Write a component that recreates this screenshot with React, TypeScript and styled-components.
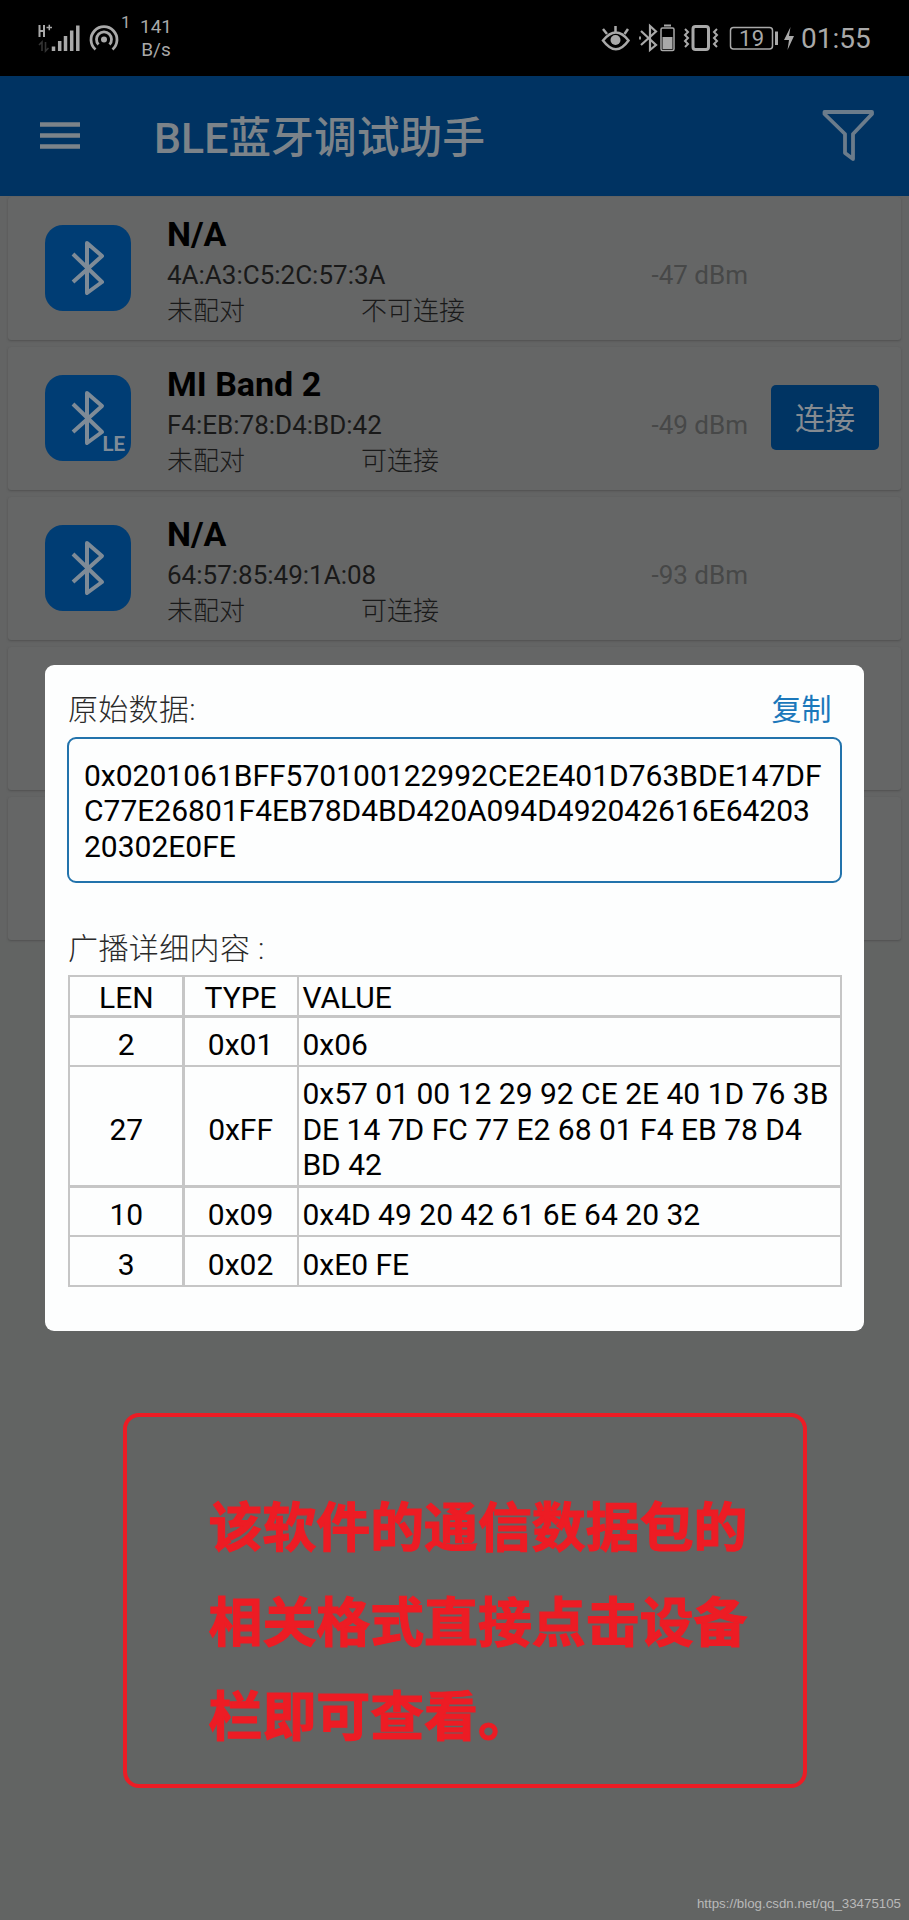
import React from "react";
import styled, { createGlobalStyle } from "styled-components";

const Global = createGlobalStyle`
  * { box-sizing: border-box; }
  body { margin: 0; background: #626463; }
`;

const Screen = styled.div`
  position: relative;
  width: 909px;
  height: 1920px;
  overflow: hidden;
  display: flex;
  flex-direction: column;
  background: #626463;
  font-family: Roboto, "Noto Sans CJK SC", sans-serif;
  color: #000;
`;

const StatusBar = styled.header`
  flex: none;
  height: 76px;
  display: flex;
  justify-content: space-between;
  background: #000;
  color: #a9a9a9;
`;

const StatusGroup = styled.div`
  display: flex;
  align-items: flex-start;
`;

const StatusSvg = styled.svg`
  display: block;
  height: 76px;
  flex: none;
`;

const HotspotCount = styled.span`
  margin: 12px 0 0 1px;
  width: 12px;
  font-size: 17px;
  line-height: 20px;
`;

const Speed = styled.div`
  margin: 15px 0 0 5px;
  width: 36px;
  text-align: center;
  font-size: 19px;
  line-height: 23px;
`;

const Clock = styled.span`
  width: 108px;
  padding-top: 23px;
  font-size: 28px;
  line-height: 32px;
`;

const BatteryLevel = styled.text`
  font-size: 22px;
  letter-spacing: 0.5px;
`;

const TitleBar = styled.div`
  flex: none;
  height: 120px;
  display: flex;
  align-items: center;
  padding: 0 33px 0 40px;
  background: #003362;
  color: #7c8389;
`;

const Title = styled.h1`
  flex: 1;
  margin: 4px 0 0 74px;
  font-size: 42.8px;
  line-height: 56px;
  font-weight: 500;
`;

const DeviceList = styled.main`
  flex: none;
  display: flex;
  flex-direction: column;
  gap: 7px;
  padding: 1px 8px 0;
  background: #636464;
`;

const Card = styled.article`
  height: 143px;
  display: flex;
  border-radius: 3px;
  background: #656666;
  box-shadow: 0 1px 2px #505151;
`;

const DeviceIcon = styled.div`
  flex: none;
  position: relative;
  width: 86px;
  height: 86px;
  margin: 28px 0 0 37px;
  border-radius: 18px;
  background: #003d74;
`;

const LeBadge = styled.span`
  position: absolute;
  right: 6px;
  bottom: 6px;
  font: 700 20.5px/21px Roboto, sans-serif;
  color: #7e8b97;
`;

const Info = styled.div`
  flex: none;
  width: 581px;
  margin: 16px 0 0 36px;
`;

const Name = styled.h2`
  margin: 0;
  font-size: 34px;
  line-height: 42px;
  font-weight: 700;
`;

const Address = styled.div`
  display: flex;
  justify-content: space-between;
  padding-top: 1px;
  font-size: 26px;
  line-height: 38px;
  color: #191919;
`;

const Rssi = styled.span`
  width: 98px;
  text-align: right;
  white-space: nowrap;
  color: #474848;
`;

const States = styled.div`
  display: flex;
  font-size: 26px;
  line-height: 34px;
  font-weight: 300;
  color: #191919;
`;

const PairState = styled.span`
  width: 194px;
`;

const ConnectButton = styled.button`
  flex: none;
  width: 108px;
  height: 65px;
  margin: 38px 0 0 23px;
  padding: 2px 0 0;
  border: 0;
  border-radius: 5px;
  background: #003463;
  color: #858b91;
  font: 400 30px/40px Roboto, "Noto Sans CJK SC", sans-serif;
`;

const Dialog = styled.section`
  position: absolute;
  left: 45px;
  top: 665px;
  width: 818.5px;
  height: 666px;
  padding: 23px 22px 0;
  border-radius: 9px;
  background: #fdfefe;
`;

const DialogHead = styled.div`
  display: flex;
  justify-content: space-between;
  height: 49px;
  padding: 0 10px 0 1px;
`;

const Label = styled.div<{ $spacing: string }>`
  font-size: 30px;
  line-height: 44px;
  font-weight: 300;
  letter-spacing: ${(p) => p.$spacing};
  color: #2a2a2a;
`;

const Copy = styled.a`
  font-size: 30px;
  line-height: 44px;
  color: #1b78bb;
`;

const RawData = styled.div`
  height: 146px;
  padding: 19px 15px;
  border: 2px solid #2273ac;
  border-radius: 9px;
  font-size: 30px;
  line-height: 35.4px;
  white-space: pre;
`;

const Details = styled.div`
  padding: 44px 0 0 1px;
`;

const Table = styled.div`
  width: fit-content;
  margin-top: 4px;
  display: grid;
  grid-template-columns: 112px 112px 541px;
  grid-template-rows: 38px 47.5px 118px 47.5px 47.5px;
  gap: 2.3px;
  padding: 2.3px;
  background: #c6c6c6;
  font-size: 30px;
  line-height: 35.4px;
`;

const Cell = styled.div<{ $center?: boolean; $head?: boolean }>`
  display: flex;
  align-items: center;
  justify-content: ${(p) => (p.$center ? "center" : "flex-start")};
  padding: ${(p) => (p.$head ? "3px" : "6px")} 0 0 ${(p) => (p.$center ? "0" : "3.5px")};
  background: #fdfefe;
  white-space: pre;
`;

const Note = styled.aside`
  position: absolute;
  left: 123px;
  top: 1413px;
  width: 684px;
  height: 375px;
  padding: 60px 0 0 81.5px;
  border: 4px solid #ed1c24;
  border-radius: 16px;
  color: #ed1c24;
  font: 700 53.9px/94.5px "Noto Sans CJK SC", sans-serif;
  -webkit-text-stroke: 1.2px #ed1c24;
  white-space: pre;
`;

const Watermark = styled.footer`
  position: absolute;
  right: 8px;
  bottom: 7px;
  font: 13.3px/18px "Liberation Sans", Arial, sans-serif;
  color: #b9b9b9;
`;

const BluetoothGlyph = () => (
  <svg width="86" height="86" viewBox="0 0 86 86" fill="none" stroke="#7e8b97" strokeWidth="4" strokeLinejoin="round">
    <path d="M28 29 57 57 42 68V18L57 31 28 57" />
  </svg>
);

const devices = [
  { name: "N/A", mac: "4A:A3:C5:2C:57:3A", state: "不可连接", rssi: "-47 dBm" },
  { name: "MI Band 2", mac: "F4:EB:78:D4:BD:42", state: "可连接", rssi: "-49 dBm", le: true, connect: true },
  { name: "N/A", mac: "64:57:85:49:1A:08", state: "可连接", rssi: "-93 dBm" },
];

const records = [
  ["LEN", "TYPE", "VALUE"],
  ["2", "0x01", "0x06"],
  ["27", "0xFF", "0x57 01 00 12 29 92 CE 2E 40 1D 76 3B\nDE 14 7D FC 77 E2 68 01 F4 EB 78 D4\nBD 42"],
  ["10", "0x09", "0x4D 49 20 42 61 6E 64 20 32"],
  ["3", "0x02", "0xE0 FE"],
];

const StatusLeft = () => (
  <StatusSvg width="120" viewBox="0 0 120 76" fill="none" stroke="#a9a9a9">
    <path d="M39.5 25v12M44 25v12M39.5 31H44" strokeWidth="2" />
    <path d="M46.5 27.500h5.500M49.300 24.700v5.600" strokeWidth="1.500" />
    <path d="M42 51V42l-3 3M45.500 42v9l3-3" stroke="#343434" strokeWidth="1.600" />
    <path d="M53.500 46.500V51M59.700 41V51M65.500 36V51M71.700 30.500V51M77.800 25.500V51" strokeWidth="3.500" />
    <path d="M95.500 49.500A13 13 0 1 1 112.500 49.500M98.500 44.500A7.500 7.500 0 1 1 109.500 44.500" strokeWidth="2.800" />
    <circle cx="104" cy="39.500" r="3" fill="#a9a9a9" stroke="none" />
  </StatusSvg>
);

const StatusRight = () => (
  <StatusSvg width="206" viewBox="595 0 206 76" fill="none" stroke="#a9a9a9" strokeWidth="2.500">
    <path d="M603 40.500Q616 24.500 628.500 40.500Q616 58 603 40.500ZM615.500 32V26M607 34 603 29M624.500 34 628 29" />
    <circle cx="615.500" cy="40" r="5" fill="#a9a9a9" stroke="none" />
    <path d="M641 31 656 45 650 50V26L656 31.500 641 45" strokeWidth="2.200" />
    <path d="M640 36.500v3" strokeWidth="1.800" />
    <rect x="661" y="28" width="13" height="22.500" rx="1.500" strokeWidth="1.500" />
    <path d="M664 25.500h7" strokeWidth="2" />
    <path d="M662.500 37h10v12h-10z" fill="#a9a9a9" stroke="none" />
    <rect x="693" y="26.500" width="15.500" height="23" rx="2.500" strokeWidth="3" />
    <path d="M685 29l3 3-3 3 3 3-3 3 3 3-3 3M717 29l-3 3 3 3-3 3 3 3-3 3 3 3" strokeWidth="2" />
    <rect x="730.500" y="27.500" width="42" height="21.500" rx="3" strokeWidth="1.500" />
    <path d="M776.500 31.500v13.500" strokeWidth="3" />
    <path d="M790.500 27 784 40h5l-1.500 10 6.500-14h-5z" fill="#a9a9a9" stroke="none" />
    <BatteryLevel x="739" y="45.500" fill="#a9a9a9" stroke="none">19</BatteryLevel>
  </StatusSvg>
);

export default function App() {
  return (
    <Screen>
      <Global />
      <StatusBar>
        <StatusGroup>
          <StatusLeft />
          <HotspotCount>1</HotspotCount>
          <Speed>141<br />B/s</Speed>
        </StatusGroup>
        <StatusGroup>
          <StatusRight />
          <Clock>01:55</Clock>
        </StatusGroup>
      </StatusBar>
      <TitleBar>
        <svg width="40" height="30" viewBox="0 0 40 30" stroke="#7c8389" strokeWidth="4.500">
          <path d="M0 3.500H40M0 14.500H40M0 25.500H40" />
        </svg>
        <Title>BLE蓝牙调试助手</Title>
        <svg width="56" height="58" viewBox="0 0 56 58" fill="none" stroke="#6b7c8b" strokeWidth="3.800" strokeLinejoin="round">
          <path d="M4.500 5H52V7L33 27V52L25 46V27L4.500 7Z" />
        </svg>
      </TitleBar>
      <DeviceList>
        {devices.map((d) => (
          <Card key={d.mac}>
            <DeviceIcon>
              <BluetoothGlyph />
              {d.le && <LeBadge>LE</LeBadge>}
            </DeviceIcon>
            <Info>
              <Name>{d.name}</Name>
              <Address>
                <span>{d.mac}</span>
                <Rssi>{d.rssi}</Rssi>
              </Address>
              <States>
                <PairState>未配对</PairState>
                <span>{d.state}</span>
              </States>
            </Info>
            {d.connect && <ConnectButton>连接</ConnectButton>}
          </Card>
        ))}
        <Card />
        <Card />
      </DeviceList>
      <Dialog>
        <DialogHead>
          <Label $spacing="0.3px">原始数据:</Label>
          <Copy>复制</Copy>
        </DialogHead>
        <RawData>{"0x0201061BFF570100122992CE2E401D763BDE147DF\nC77E26801F4EB78D4BD420A094D492042616E64203\n20302E0FE"}</RawData>
        <Details>
          <Label $spacing="0.4px">广播详细内容 :</Label>
          <Table>
            {records.map((row, r) =>
              row.map((value, c) => (
                <Cell key={`${r}-${c}`} $center={c < 2} $head={r === 0}>
                  {value}
                </Cell>
              )),
            )}
          </Table>
        </Details>
      </Dialog>
      <Note>{"该软件的通信数据包的\n相关格式直接点击设备\n栏即可查看。"}</Note>
      <Watermark>https://blog.csdn.net/qq_33475105</Watermark>
    </Screen>
  );
}
